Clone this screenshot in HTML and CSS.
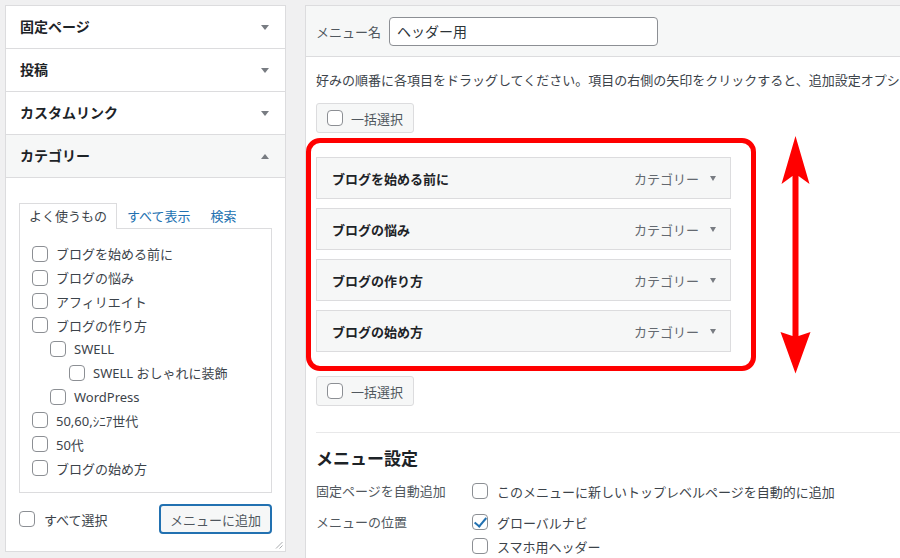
FILE: index.html
```html
<!DOCTYPE html>
<html lang="ja">
<head>
<meta charset="utf-8">
<title>メニュー</title>
<link rel="stylesheet" href="styles.css">
</head>
<body>
<div class="screen">
  <aside class="side">
    <div class="acc-row"><h3>固定ページ</h3><span class="tri"></span></div>
    <div class="acc-row"><h3>投稿</h3><span class="tri"></span></div>
    <div class="acc-row"><h3>カスタムリンク</h3><span class="tri"></span></div>
    <div class="acc-row open"><h3>カテゴリー</h3><span class="tri up"></span></div>
    <div class="acc-body">
      <ul class="tabs">
        <li class="tab active">よく使うもの</li>
        <li class="tab">すべて表示</li>
        <li class="tab">検索</li>
      </ul>
      <div class="tab-panel">
        <ul class="cat-list">
          <li class="cat"><input type="checkbox" class="cb">ブログを始める前に</li>
          <li class="cat"><input type="checkbox" class="cb">ブログの悩み</li>
          <li class="cat"><input type="checkbox" class="cb">アフィリエイト</li>
          <li class="cat"><input type="checkbox" class="cb">ブログの作り方</li>
          <li class="cat l1"><input type="checkbox" class="cb">SWELL</li>
          <li class="cat l2"><input type="checkbox" class="cb">SWELL おしゃれに装飾</li>
          <li class="cat l1"><input type="checkbox" class="cb">WordPress</li>
          <li class="cat"><input type="checkbox" class="cb">50,60,ｼﾆｱ世代</li>
          <li class="cat"><input type="checkbox" class="cb">50代</li>
          <li class="cat"><input type="checkbox" class="cb">ブログの始め方</li>
        </ul>
      </div>
      <div class="side-actions">
        <label class="select-all"><input type="checkbox" class="cb">すべて選択</label>
        <button class="btn-add" type="button">メニューに追加</button>
      </div>
    </div>
    <svg class="resize" width="8" height="8" viewBox="0 0 8 8"><path d="M1 7.5L7.5 1M4.5 7.5L7.5 4.5" stroke="#a7aaad" stroke-width="1" fill="none"/></svg>
  </aside>

  <main class="editor">
    <header class="editor-head">
      <label class="name-label">メニュー名</label>
      <div class="name-input">ヘッダー用</div>
    </header>
    <div class="editor-body">
      <p class="desc">好みの順番に各項目をドラッグしてください。項目の右側の矢印をクリックすると、追加設定オプションが表示されます。</p>
      <label class="bulk"><input type="checkbox" class="cb">一括選択</label>

      <div class="menu-list">
        <div class="menu-item"><span class="mi-title">ブログを始める前に</span><span class="mi-type">カテゴリー</span><span class="tri-sm"></span></div>
        <div class="menu-item"><span class="mi-title">ブログの悩み</span><span class="mi-type">カテゴリー</span><span class="tri-sm"></span></div>
        <div class="menu-item"><span class="mi-title">ブログの作り方</span><span class="mi-type">カテゴリー</span><span class="tri-sm"></span></div>
        <div class="menu-item"><span class="mi-title">ブログの始め方</span><span class="mi-type">カテゴリー</span><span class="tri-sm"></span></div>
        <svg class="dbl-arrow" width="31" height="240" viewBox="0 0 31 240">
          <path d="M15.5 1 L29.5 49 L18.5 41 L18.5 201 L30.5 197 L15.5 238.5 L0.5 197 L12.5 201 L12.5 41 L1.5 49 Z" fill="#ff0000"/>
        </svg>
      </div>

      <label class="bulk bulk2"><input type="checkbox" class="cb">一括選択</label>

      <hr class="sep">
      <h3 class="settings-title">メニュー設定</h3>
      <div class="settings">
        <div class="set-label">固定ページを自動追加</div>
        <div class="set-field">
          <label class="opt"><input type="checkbox" class="cb">このメニューに新しいトップレベルページを自動的に追加</label>
        </div>
        <div class="set-label">メニューの位置</div>
        <div class="set-field">
          <label class="opt"><input type="checkbox" class="cb" checked>グローバルナビ</label>
          <label class="opt"><input type="checkbox" class="cb">スマホ用ヘッダー</label>
        </div>
      </div>
    </div>
  </main>
</div>
</body>
</html>
```

FILE: styles.css
```css
* { box-sizing: border-box; }

html, body {
  margin: 0;
  height: 558px;
  overflow: hidden;
}

body {
  background: #f0f0f1;
  font-family: "Noto Sans", "Noto Sans CJK JP", sans-serif;
  font-size: 13px;
  color: #3c434a;
}

.screen {
  display: flex;
  align-items: flex-start;
  gap: 19px;
  padding: 5px 0 0 5px;
}

/* ---------- checkbox ---------- */
.cb {
  appearance: none;
  -webkit-appearance: none;
  position: relative;
  flex: 0 0 16px;
  width: 16px;
  height: 16px;
  margin: 0;
  border: 1px solid #8c8f94;
  border-radius: 4px;
  background: #fff;
}
.cb:checked::before {
  content: "";
  position: absolute;
  left: 4px;
  top: 0px;
  width: 5px;
  height: 10px;
  border-right: 2.5px solid #2271b1;
  border-bottom: 2.5px solid #2271b1;
  transform: rotate(40deg);
}

/* ---------- left side ---------- */
.side {
  position: relative;
  flex: 0 0 281px;
  height: 547px;
  background: #fff;
  border: 1px solid #dcdcde;
}

.acc-row {
  display: flex;
  align-items: center;
  justify-content: space-between;
  height: 43px;
  padding: 0 16px 0 14px;
  border-bottom: 1px solid #dcdcde;
}
.acc-row.open { background: #f6f7f7; }
.acc-row h3 {
  margin: 0;
  font-size: 14px;
  font-weight: 700;
  line-height: 20px;
  color: #1d2327;
}

.tri {
  width: 0;
  height: 0;
  border-left: 4px solid transparent;
  border-right: 4px solid transparent;
  border-top: 5px solid #787c82;
}
.tri.up {
  border-top: 0;
  border-bottom: 5px solid #787c82;
}

.acc-body { padding: 25px 13px 0; }

.tabs {
  display: flex;
  align-items: flex-end;
  list-style: none;
  margin: 0;
  padding: 0;
}
.tab {
  height: 25px;
  padding: 0 9px;
  line-height: 24px;
  color: #2271b1;
  border: 1px solid transparent;
  border-bottom: 0;
  white-space: nowrap;
}
.tab.active {
  position: relative;
  z-index: 1;
  height: 26px;
  margin-bottom: -1px;
  color: #3c434a;
  background: #fff;
  border-color: #dcdcde;
}

.tab-panel {
  height: 265px;
  padding: 13px 12px 0;
  border: 1px solid #dcdcde;
}
.cat-list {
  list-style: none;
  margin: 0;
  padding: 0;
}
.cat {
  display: flex;
  align-items: center;
  gap: 8px;
  height: 23.8px;
  white-space: nowrap;
}
.cat.l1 { padding-left: 18px; }
.cat.l2 { padding-left: 37px; }

.side-actions {
  display: flex;
  align-items: center;
  justify-content: space-between;
  margin-top: 11px;
}
.select-all {
  display: flex;
  align-items: center;
  gap: 9px;
}
.btn-add {
  height: 30px;
  padding: 0 9px;
  font: inherit;
  color: #50575e;
  background: #f6f7f7;
  border: 2px solid #2271b1;
  border-radius: 4px;
}

.resize {
  position: absolute;
  right: 2px;
  bottom: 2px;
}

/* ---------- editor ---------- */
.editor {
  flex: 0 0 640px;
  min-height: 600px;
  background: #fff;
  border: 1px solid #dcdcde;
}

.editor-head {
  display: flex;
  align-items: center;
  gap: 8px;
  height: 51px;
  padding: 0 10px;
  background: #f6f7f7;
  border-bottom: 1px solid #dcdcde;
}
.name-label {
  color: #50575e;
  white-space: nowrap;
}
.name-input {
  width: 269px;
  height: 29px;
  padding: 0 7px;
  font-size: 14px;
  line-height: 27px;
  color: #2c3338;
  background: #fff;
  border: 1px solid #8c8f94;
  border-radius: 4px;
}

.editor-body { padding: 0 0 0 10px; }

.desc {
  margin: 13px 0 0;
  line-height: 20px;
  white-space: nowrap;
}

.bulk {
  display: flex;
  align-items: center;
  gap: 8px;
  width: fit-content;
  height: 30px;
  margin-top: 13px;
  padding: 0 10px;
  color: #50575e;
  background: #f6f7f7;
  border: 1px solid #dcdcde;
  border-radius: 3px;
}
.bulk2 { margin-top: 24px; }

.menu-list {
  position: relative;
  display: flex;
  flex-direction: column;
  gap: 9px;
  width: 415px;
  margin-top: 24px;
}
.menu-list::before {
  content: "";
  position: absolute;
  top: -19px;
  left: -10px;
  right: -25px;
  bottom: -19px;
  border: 5px solid #ff0000;
  border-radius: 14px;
  pointer-events: none;
}
.menu-item {
  display: flex;
  align-items: center;
  height: 42px;
  padding: 0 14px 0 15px;
  background: #f6f7f7;
  border: 1px solid #dcdcde;
}
.mi-title {
  flex: 1;
  font-weight: 700;
  color: #1d2327;
}
.mi-type {
  margin-right: 11px;
  color: #646970;
}
.tri-sm {
  width: 0;
  height: 0;
  border-left: 3.5px solid transparent;
  border-right: 3.5px solid transparent;
  border-top: 5px solid #787c82;
}
.dbl-arrow {
  position: absolute;
  left: 464px;
  top: -22px;
}

.sep {
  margin: 26px 0 0;
  border: 0;
  border-top: 1px solid #e8e8e9;
}

.settings-title {
  margin: 14px 0 0;
  font-size: 17px;
  font-weight: 700;
  line-height: 24px;
  color: #1d2327;
}

.settings {
  display: grid;
  grid-template-columns: 156px auto;
  row-gap: 11px;
  margin-top: 10px;
}
.set-label {
  line-height: 20px;
  color: #50575e;
  white-space: nowrap;
}
.set-field {
  display: flex;
  flex-direction: column;
  gap: 4px;
}
.opt {
  display: flex;
  align-items: center;
  gap: 9px;
  height: 20px;
  white-space: nowrap;
}
```
